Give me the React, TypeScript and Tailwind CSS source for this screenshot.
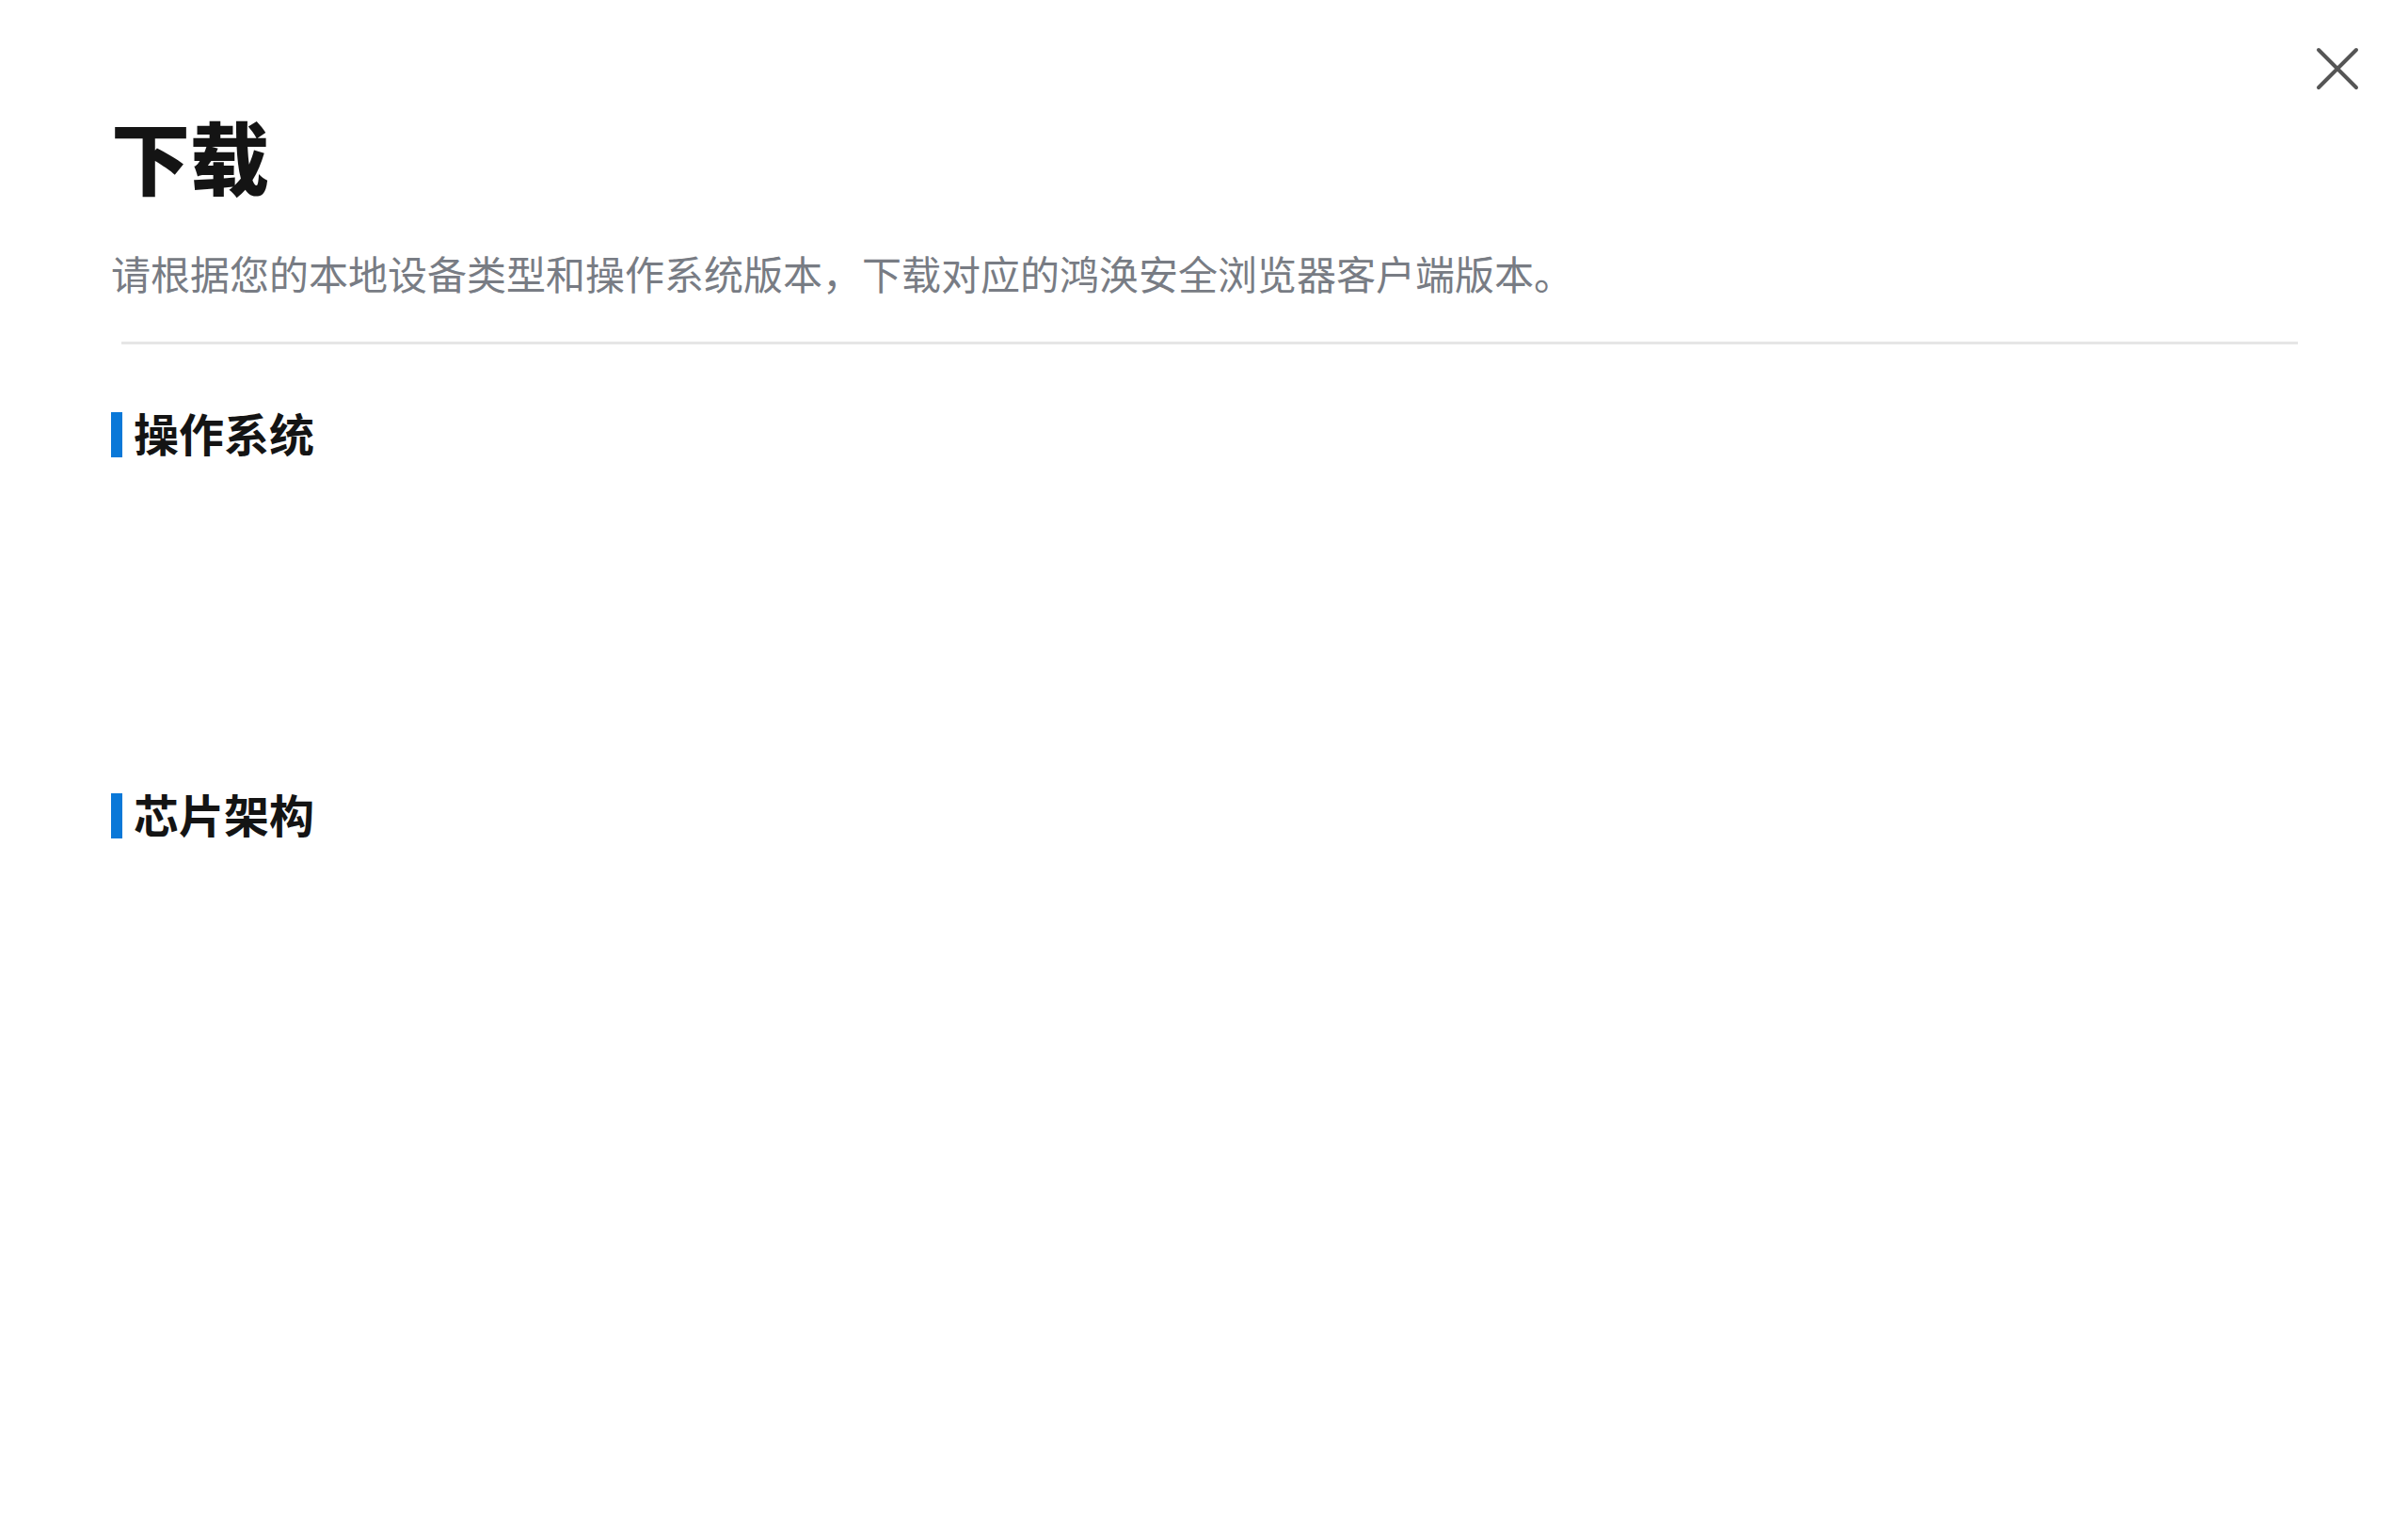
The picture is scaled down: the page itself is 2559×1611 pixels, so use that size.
import React from 'react';

const FONT = '"Noto Sans CJK SC", "Noto Sans", sans-serif';

function SectionTitle({ title }: { title: string }): React.ReactElement {
  return (
    <div className="flex items-start">
      <span className="h-[48px] w-[12px] bg-[#0a78d8]" />
      <h2 className="-mt-[3px] ml-[12px] text-[48px] font-bold leading-none text-[#141414]">{title}</h2>
    </div>
  );
}

export default function App(): React.ReactElement {
  return (
    <div className="relative min-h-screen bg-white" style={{ fontFamily: FONT }}>
      {/* close */}
      <button
        type="button"
        aria-label="close"
        className="absolute right-[48px] top-[46px] flex h-[54px] w-[54px] items-center justify-center"
      >
        <svg width="46" height="46" viewBox="0 0 46 46" fill="none">
          <path d="M3 3L43 43M43 3L3 43" stroke="#555555" strokeWidth="4" strokeLinecap="round" />
        </svg>
      </button>

      <div className="pl-[118px] pr-[117px] pt-[123px]">
        <h1 className="text-[84px] font-black leading-none text-[#141414]">下载</h1>
        <p className="mt-[62px] text-[42px] leading-none text-[#787c84]">
          请根据您的本地设备类型和操作系统版本，下载对应的鸿涣安全浏览器客户端版本。
        </p>
        <div className="ml-[11px] mt-[52px] h-[3px] bg-[#e6e6e6]" />

        {/* 操作系统 */}
        <div className="mt-[72px]">
          <SectionTitle title="操作系统" />
          <div className="h-[357px]" />
        </div>

        {/* 芯片架构 */}
        <div>
          <SectionTitle title="芯片架构" />
        </div>
      </div>
    </div>
  );
}
